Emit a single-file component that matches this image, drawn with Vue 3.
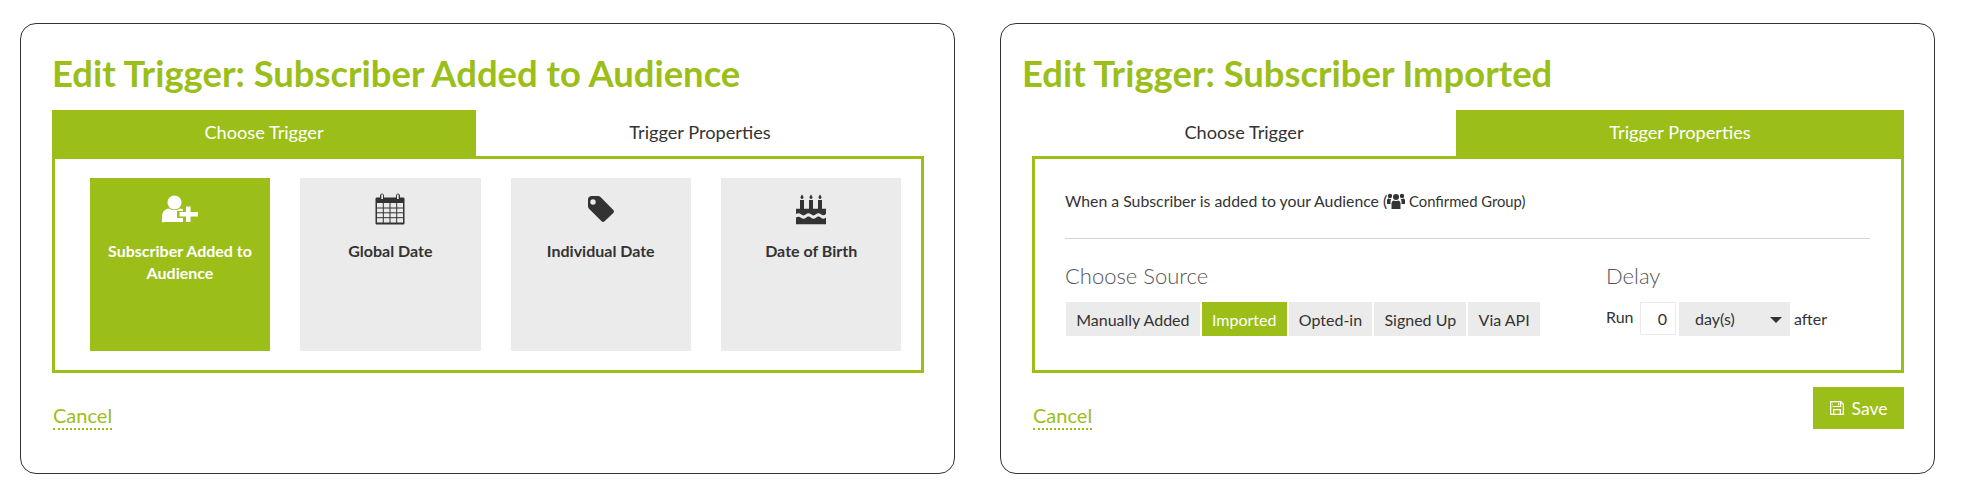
<script setup>
const triggers = [
  { key: 'user', label: 'Subscriber Added to Audience', active: true },
  { key: 'calendar', label: 'Global Date', active: false },
  { key: 'tag', label: 'Individual Date', active: false },
  { key: 'cake', label: 'Date of Birth', active: false },
]
const sources = [
  { label: 'Manually Added', active: false },
  { label: 'Imported', active: true },
  { label: 'Opted-in', active: false },
  { label: 'Signed Up', active: false },
  { label: 'Via API', active: false },
]
</script>

<template>
  <div class="page">
    <section class="card">
      <h1 class="title">Edit Trigger: Subscriber Added to Audience</h1>
      <div class="tabs">
        <div class="tab active">Choose Trigger</div>
        <div class="tab">Trigger Properties</div>
      </div>
      <div class="panel tiles">
        <div v-for="t in triggers" :key="t.key" class="tile" :class="{ active: t.active }">
          <svg class="tile-icon" viewBox="0 0 36 32">
            <g v-if="t.key === 'user'" fill="#fff" transform="translate(0 1)">
              <circle cx="12.5" cy="8.5" r="7" />
              <path d="M0 28v-5.500c0-4.500 3-7.500 7-8 3 2 8 2 11 0 2.500.3 4.500 1.500 5.500 3.500V28H2.500C1 28 0 29 0 28z" />
              <path d="M21 12h11v5h6v7h-6v6H21v-6h-6v-7h6z" fill="#9bbe19" />
              <path d="M24 12.500h4.500v5.500h7.500v4.500h-7.500v5.500H24v-5.500h-6.500V18H24z" />
            </g>
            <g v-else-if="t.key === 'calendar'">
              <path fill="#333" d="M5 4h3V2.500C8 1 9 0 10 0s2 1 2 2.500V4h12V2.500C24 1 25 0 26 0s2 1 2 2.500V4h3c1 0 1.500.5 1.500 1.500v24c0 1-.5 1.500-1.500 1.500H5c-1 0-1.500-.5-1.500-1.500v-24C3.500 4.500 4 4 5 4z" transform="translate(0 .5)" />
              <rect x="9.300" y="1.500" width="1.700" height="4.500" fill="#ebebeb" />
              <rect x="25" y="1.500" width="1.700" height="4.500" fill="#ebebeb" />
              <rect x="5" y="10" width="26" height="19.500" fill="#ebebeb" />
              <g fill="#333">
                <rect x="5" y="14.500" width="26" height="1" />
                <rect x="5" y="19.300" width="26" height="1" />
                <rect x="5" y="24.200" width="26" height="1" />
                <rect x="10.800" y="10" width="1" height="20" />
                <rect x="17.500" y="10" width="1" height="20" />
                <rect x="24.200" y="10" width="1" height="20" />
              </g>
            </g>
            <g v-else-if="t.key === 'tag'" transform="translate(0 1)">
              <path fill="#333" fill-rule="evenodd" d="M8.500 2h6.500c1 0 1.700.4 2.500 1.100l12.800 13c.9.900.9 2.100 0 3L21.600 27.300c-.9.900-2.100.9-3 0L6 14.700c-.7-.7-1-1.500-1-2.500V5.500C5 3.500 6.500 2 8.500 2zM10 5.300a2.700 2.700 0 1 0 0 5.400 2.700 2.700 0 0 0 0-5.400z" />
            </g>
            <g v-else fill="#333">
              <path d="M9 1.500c-1 1.500-1.500 2.300-1.500 3.100 0 .8.700 1.400 1.500 1.400s1.500-.6 1.500-1.400c0-.8-.5-1.600-1.500-3.100zM18 1.500c-1 1.500-1.500 2.300-1.500 3.100 0 .8.700 1.400 1.500 1.400s1.500-.6 1.500-1.400c0-.8-.5-1.600-1.500-3.100zM27 1.500c-1 1.500-1.500 2.300-1.500 3.100 0 .8.700 1.400 1.500 1.400s1.500-.6 1.500-1.400c0-.8-.5-1.600-1.500-3.100z" />
              <rect x="7" y="7" width="4" height="9" />
              <rect x="16" y="7" width="4" height="9" />
              <rect x="25" y="7" width="4" height="9" />
              <g transform="translate(0 1.200)">
                <path d="M3 14.500h30v5.300c-2 1.700-3.400 1.700-5 .3-1.700-1.500-3.400-1.500-5 0-1.700 1.500-3.400 1.500-5 0-1.700-1.500-3.400-1.500-5 0-1.700 1.500-3.400 1.500-5 0-1.600-1.400-3-1.400-5-.3z" />
                <path d="M3 23.200c2-1 3.400-1 5 .3 1.700 1.500 3.400 1.500 5 0 1.700-1.500 3.400-1.500 5 0 1.700 1.500 3.400 1.500 5 0 1.700-1.500 3.400-1.500 5 0 1.600 1.300 3 1.300 5-.3V30H3z" />
              </g>
            </g>
          </svg>
          <div class="tile-label">{{ t.label }}</div>
        </div>
      </div>
      <div class="footer">
        <a class="cancel">Cancel</a>
      </div>
    </section>

    <section class="card card-b">
      <h1 class="title">Edit Trigger: Subscriber Imported</h1>
      <div class="tabs">
        <div class="tab">Choose Trigger</div>
        <div class="tab active">Trigger Properties</div>
      </div>
      <div class="panel props">
        <p class="summary">
          When a Subscriber is added to your Audience (<svg class="users" viewBox="0 0 18 16"><g fill="#333"><circle cx="9" cy="4" r="3" /><circle cx="3" cy="3" r="2.200" /><circle cx="15" cy="3" r="2.200" /><path d="M4.500 16V10.500C4.500 8.500 6 7.500 7 7.500c1 .8 3 .8 4 0 1 0 2.500 1 2.500 3V16z" /><path d="M0 11V7.500C0 6 1 5.500 1.700 5.500c.8.600 1.800.7 2.600.4-.4.600-.8 1.500-.8 2.600V11zM18 11V7.500c0-1.500-1-2-1.700-2-.8.600-1.800.7-2.600.4.400.600.8 1.500.8 2.600V11z" /></g></svg><span class="group"> Confirmed Group)</span>
        </p>
        <hr class="rule" />
        <div class="fields">
          <div class="source">
            <h2 class="field-title source-title">Choose Source</h2>
            <div class="choices">
              <button v-for="s in sources" :key="s.label" class="choice" :class="{ active: s.active }">{{ s.label }}</button>
            </div>
          </div>
          <div class="delay">
            <h2 class="field-title">Delay</h2>
            <div class="delay-row">
              <span class="run">Run</span>
              <span class="count">0</span>
              <span class="unit">day(s)<i class="caret"></i></span>
              <span class="after">after</span>
            </div>
          </div>
        </div>
      </div>
      <div class="footer">
        <a class="cancel">Cancel</a>
        <button class="save">
          <svg class="save-icon" viewBox="0 0 14 14"><path fill="#fff" fill-rule="evenodd" d="M1 0h10l3 3v10a1 1 0 0 1-1 1H1a1 1 0 0 1-1-1V1a1 1 0 0 1 1-1zm2 1.300V5h7V1.300zM8 2h1.300v2.300H8zM1.300 1.300v11.400H3V8h8v4.700h1.700V3.500L11.300 2v4H2.700V1.300zM4.300 9.300v3.400h5.400V9.300z" /></svg>
          Save
        </button>
      </div>
    </section>
  </div>
</template>

<style>
html, body { background: #fff; }
</style>

<style scoped>
.page {
  display: flex;
  gap: 45px;
  padding: 23px 20px 0;
  font-family: Lato, "Open Sans", sans-serif;
  color: #333;
}
.card {
  box-sizing: border-box;
  width: 935px;
  height: 451px;
  border: 1px solid #333;
  border-radius: 16px;
  background: #fff;
  padding: 27px 30px 0 31px;
}
.title {
  margin: 0;
  font-size: 36.4px;
  line-height: 44px;
  font-weight: 700;
  color: #9bbe19;
  white-space: nowrap;
}
.card-b .title { margin-left: -10px; }
.tabs {
  display: flex;
  height: 46px;
  margin-top: 15px;
}
.tab {
  display: flex;
  align-items: center;
  justify-content: center;
  box-sizing: border-box;
  padding-bottom: 2px;
  font-size: 18.200px;
  color: #333;
}
.tab.active { background: #9bbe19; color: #fff; }
.tab:first-child { width: 424px; }
.tab:last-child { flex: 1; }
.panel {
  box-sizing: border-box;
  height: 217px;
  border: 3px solid #9bbe19;
}
.tiles {
  display: grid;
  grid-template-columns: repeat(4, 180.400px);
  column-gap: 30px;
  padding: 19px 20px 19px 34.800px;
}
.tile {
  background: #ebebeb;
  padding: 15px 12px 0;
  text-align: center;
  font-size: 16px;
  font-weight: 700;
  line-height: 22px;
  color: #333;
}
.tile.active { background: #9bbe19; color: #fff; }
.tile-icon {
  display: block;
  width: 36px;
  height: 32px;
  margin: 0 auto 15px;
}
.props { padding: 31px 31px 0 30px; }
.summary {
  margin: 0;
  font-size: 15.800px;
  line-height: 22px;
  color: #333;
  white-space: nowrap;
}
.users {
  width: 18px;
  height: 16px;
  vertical-align: -2px;
}
.group { font-size: 14.800px; }
.rule {
  margin: 26px 0 0;
  border: 0;
  border-top: 1px solid #d5d5d5;
}
.fields {
  display: flex;
  margin: 24px 0 0 1px;
}
.source { width: 540px; }
.field-title {
  margin: 0 0 13px;
  font-size: 22px;
  line-height: 26px;
  font-weight: 300;
  color: #555;
}
.source-title { margin-left: -1px; }
.choices { display: flex; gap: 2px; }
.choice {
  height: 34px;
  padding: 0 10.200px;
  border: 0;
  background: #ebebeb;
  font: 400 16px Lato, sans-serif;
  color: #333;
  white-space: nowrap;
}
.choice.active { background: #9bbe19; color: #fff; }
.delay-row {
  display: flex;
  align-items: flex-start;
  font-size: 16px;
  line-height: 34px;
  color: #333;
}
.run { width: 34px; line-height: 30px; }
.count {
  box-sizing: border-box;
  width: 36px;
  height: 33px;
  border: 1px solid #ebebeb;
  padding-right: 8px;
  text-align: right;
  line-height: 31px;
}
.unit {
  position: relative;
  box-sizing: border-box;
  width: 111px;
  height: 34px;
  margin-left: 3px;
  padding-left: 16px;
  background: #ebebeb;
}
.caret {
  position: absolute;
  top: 15px;
  right: 8px;
  width: 0;
  height: 0;
  border-left: 6px solid transparent;
  border-right: 6px solid transparent;
  border-top: 6px solid #333;
}
.after { margin-left: 4px; }
.footer {
  display: flex;
  justify-content: space-between;
  align-items: flex-start;
  margin-top: 14px;
}
.cancel {
  display: block;
  margin-top: 16px;
  margin-left: 1px;
  padding-bottom: 1px;
  font-size: 20px;
  line-height: 24px;
  color: #9bbe19;
  border-bottom: 2px dotted #9bbe19;
}
.save {
  display: flex;
  align-items: center;
  justify-content: center;
  gap: 8px;
  width: 91px;
  height: 42px;
  padding: 0;
  border: 0;
  background: #9bbe19;
  color: #fff;
  font: 400 17.500px Lato, sans-serif;
}
.save-icon { width: 14px; height: 14px; }
</style>
